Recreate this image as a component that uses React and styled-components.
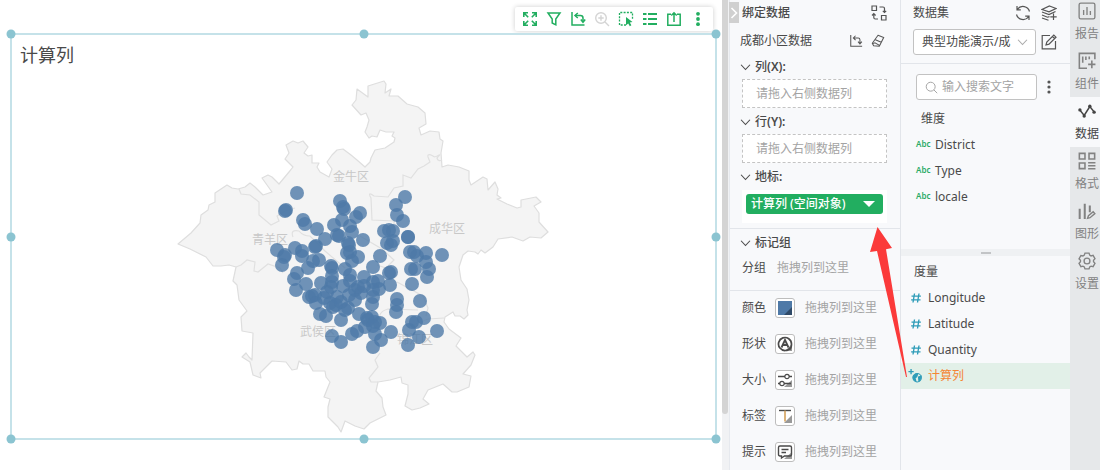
import React, { useState } from 'react';
import styled, { createGlobalStyle } from 'styled-components';

const GlobalStyle = createGlobalStyle`
  * {
    box-sizing: border-box;
  }

  body {
    margin: 0;
    background: #fff;
    color: #4a4a4a;
    font-family: "Noto Sans", "Noto Sans CJK SC", sans-serif;
    font-size: 12px;
    line-height: 20px;
  }

  button, input, select {
    font: inherit;
    color: inherit;
  }

  ul {
    margin: 0;
    padding: 0;
    list-style: none;
  }
`;

const Page = styled.div`
  position: relative;
  display: flex;
  min-height: 100vh;
`;

const Canvas = styled.main`
  flex: 1;
  display: flex;
  flex-direction: column;
  min-width: 0;
  padding: 7px 5px 30px 10px;
`;

const Toolbar = styled.div`
  display: flex;
  align-self: flex-end;
  gap: 8px;
  height: 24px;
  margin: 0 4px 2px 0;
  padding: 4px 7px;
  background: #fff;
  border-radius: 2px;
  box-shadow: 0 0 5px rgba(0, 0, 0, 0.2);
`;

const IconButton = styled.button`
  display: flex;
  padding: 0;
  border: 0;
  background: none;
  color: ${({ $color }) => $color || '#555'};
  cursor: pointer;
`;

const Frame = styled.section`
  position: relative;
  flex: 1;
  display: flex;
  flex-direction: column;
  align-items: center;
  border: 2px solid #c5e2e9;
`;

const Handle = styled.span`
  position: absolute;
  left: ${({ $x }) => $x};
  top: ${({ $y }) => $y};
  width: 9px;
  height: 9px;
  border-radius: 50%;
  background: #8bc4d1;
  transform: translate(-50%, -50%);
`;

const ChartTitle = styled.h1`
  align-self: flex-start;
  margin: 0;
  padding: 5px 8px 6px;
  font-size: 18px;
  font-weight: 400;
  line-height: 30px;
`;

const ScrollTrack = styled.div`
  width: 7px;
  background: #f1f2f4;
`;

const ScrollThumb = styled.div`
  width: 6px;
  height: 88%;
  border-radius: 0 0 3px 3px;
  background: #d4d4d4;
`;

const BindPanel = styled.aside`
  position: relative;
  width: 171px;
  background: #f8f9fb;
  border-left: 1px solid #e6e9ee;
`;

const CollapseButton = styled.button`
  position: absolute;
  left: -1px;
  top: 2px;
  display: flex;
  align-items: center;
  justify-content: center;
  width: 10px;
  height: 21px;
  padding: 0;
  border: 0;
  background: #d0d0d0;
  color: #fff;
`;

const PanelHeader = styled.header`
  display: flex;
  align-items: center;
  gap: ${({ $gap }) => $gap || '8px'};
  padding: ${({ $padding }) => $padding};
`;

const PanelTitle = styled.h2`
  flex: 1;
  margin: 0;
  font-size: 12px;
  font-weight: ${({ $strong }) => ($strong ? 500 : 400)};
`;

const Section = styled.section`
  padding: ${({ $padding }) => $padding || '0 13px 0 12px'};
  border-bottom: ${({ $line }) => ($line ? '1px solid #e2e5ea' : '0')};
`;

const SectionTitle = styled.h3`
  display: flex;
  align-items: center;
  gap: 4px;
  height: 20px;
  margin: 0 0 0 -2px;
  font-size: 12px;
  font-weight: 500;
`;

const AxisName = styled.span`
  b {
    font-weight: 600;
  }
`;

const DropZone = styled.div`
  height: 29px;
  margin: 2px 0 4px;
  padding: 0 13px;
  border: 1px dashed #c4c4c4;
  background: #fff;
  color: #a3a3a3;
  line-height: 27px;
`;

const FieldBox = styled.div`
  margin-top: 3px;
  padding: 4px 4px 9px;
  background: #fff;
`;

const FieldPill = styled.button`
  display: flex;
  align-items: center;
  justify-content: space-between;
  width: 100%;
  height: 20px;
  padding: 0 8px 0 5px;
  border: 0;
  border-radius: 3px;
  background: #22ae60;
  color: #fff;
  font-weight: 500;
`;

const MarkList = styled.div`
  display: flex;
  flex-direction: column;
  gap: 16px;
`;

const MarkRow = styled.div`
  display: flex;
  align-items: center;
  height: ${({ $height }) => $height || '20px'};
  gap: 10px;
`;

const MarkLabel = styled.span`
  width: 23px;
  white-space: nowrap;
`;

const MarkHint = styled.span`
  padding-left: ${({ $indent }) => $indent || '0'};
  color: #a3a3a3;
`;

const MarkButton = styled.button`
  display: flex;
  align-items: center;
  justify-content: center;
  width: 20px;
  height: 20px;
  padding: 0;
  border: 1px solid #bdbdbd;
  border-radius: 3px;
  background: #fff;
`;

const DataPanel = styled.aside`
  width: 170px;
  background: #f8f9fb;
  border-left: 1px solid #e2e5ea;
`;

const DatasetBar = styled.div`
  display: flex;
  align-items: center;
  gap: 5px;
  height: 39px;
  padding: 4px 13px 8px 12px;
  border-bottom: 1px solid #e2e5ea;
`;

const SelectBox = styled.label`
  flex: 1;
  display: flex;
  align-items: center;
  min-width: 0;
  height: 26px;
  padding: 0 7px 0 8px;
  border: 1px solid #c2c2c2;
  border-radius: 3px;
  background: #fff;
  color: #aaa;
`;

const Select = styled.select`
  flex: 1;
  min-width: 0;
  padding: 0;
  border: 0;
  background: transparent;
  color: #4a4a4a;
  appearance: none;
  outline: none;
`;

const SearchBar = styled.div`
  display: flex;
  align-items: center;
  gap: 4px;
  padding: 10px 13px 8px 15px;
`;

const SearchBox = styled.label`
  flex: 1;
  display: flex;
  align-items: center;
  gap: 4px;
  min-width: 0;
  height: 26px;
  padding: 0 8px;
  border: 1px solid #c2c2c2;
  border-radius: 3px;
  background: #fff;
  color: #a3a3a3;

  svg {
    flex-shrink: 0;
  }
`;

const SearchInput = styled.input`
  flex: 1;
  min-width: 0;
  padding: 0;
  border: 0;
  outline: none;
  background: transparent;

  &::placeholder {
    color: #a3a3a3;
    opacity: 1;
  }
`;

const GroupTitle = styled.h3`
  margin: 0;
  padding: ${({ $padding }) => $padding};
  font-size: 12px;
  font-weight: 400;
`;

const FieldList = styled.ul`
  min-height: ${({ $minHeight }) => $minHeight || '0'};
`;

const FieldItem = styled.li`
  display: flex;
  align-items: center;
  gap: ${({ $gap }) => $gap || '5px'};
  height: 26px;
  padding-left: ${({ $indent }) => $indent};
  background: ${({ $active }) => ($active ? '#e2f0e8' : 'transparent')};
  color: ${({ $active }) => ($active ? '#f58634' : 'inherit')};
`;

const AbcTag = styled.span`
  width: 14px;
  height: 20px;
  color: #2bab67;
  font-size: 8px;
  font-weight: 600;
  line-height: 18px;
`;

const Splitter = styled.div`
  display: flex;
  align-items: center;
  justify-content: center;
  height: 7px;
  background: #eff1f3;
`;

const Grip = styled.span`
  width: 10px;
  height: 2px;
  background: #c2c4c6;
`;

const SideTabs = styled.nav`
  width: 30px;
  background: #e6e8ea;
`;

const SideTab = styled.button`
  display: flex;
  flex-direction: column;
  align-items: center;
  gap: 4px;
  width: 100%;
  height: 50px;
  padding: 5px 0 0 4px;
  border: 0;
  background: ${({ $active }) => ($active ? '#f8f9fb' : 'transparent')};
  color: ${({ $active }) => ($active ? '#444' : '#828282')};
  white-space: nowrap;

  &:first-child {
    height: 47px;
    padding-top: 2px;
  }
`;

const Arrow = styled.svg`
  position: absolute;
  top: 227px;
  right: 192px;
  pointer-events: none;
`;

const Icon = ({ size = 16, children, ...rest }) => (
    <svg width={size} height={size} viewBox="0 0 16 16" fill="none" stroke="currentColor" strokeWidth="1.2" aria-hidden="true" {...rest}>
        {children}
    </svg>
);

const Chevron = ({ size = 11 }) => (
    <Icon size={size}><path d="M1.500 4 8 11l6.500-7" strokeWidth="1.600" /></Icon>
);

const toolbarIcons = [
    ['全屏', <Icon strokeWidth="1.6"><path d="M1.800 6V1.800H6M2 2l4.200 4.200M10 1.800h4.200V6M14 2 9.800 6.200M1.800 10v4.200H6M2 14l4.200-4.200M14.200 10v4.200H10M14 14 9.800 9.800" /></Icon>],
    ['筛选', <Icon strokeWidth="1.5"><path d="M2 2h12L9.800 8v5.800L6.200 12V8z" /></Icon>],
    ['转置', <Icon strokeWidth="1.5"><path d="M2 1v13h12.500M5.500 4.500h5q2.500 0 2.500 2.500v4" /><path d="M7.800 2 5 4.500 7.800 7M10.800 8.500 13 11.300l2.200-2.800" /></Icon>],
    ['放大', <Icon strokeWidth="1.4"><circle cx="7" cy="7" r="5.300" /><path d="m11 11 4 4M4.300 7h5.400M7 4.300v5.400" /></Icon>],
    ['选择', <Icon strokeWidth="1.3"><path d="M8 14H1.500V1.500H14.500V8" strokeDasharray="2 1.300" /><path d="m8 6 6.500 5-2.700.5 1.600 2.700-1.600 1-1.600-2.800L8 14.200z" fill="currentColor" stroke="none" /></Icon>],
    ['明细', <Icon strokeWidth="2"><path d="M1 3h3.500M6 3h9M1 8h3.500M6 8h9M1 13h3.500M6 13h9" /></Icon>],
    ['导出', <Icon strokeWidth="1.5"><path d="M5 3.300H1.800v10.900h12.400V3.300H11M8 11V2M5.300 4.500 8 1.800l2.700 2.700" /></Icon>],
    ['更多', <Icon stroke="none" fill="currentColor"><circle cx="8" cy="2.800" r="1.900" /><circle cx="8" cy="8" r="1.900" /><circle cx="8" cy="13.200" r="1.900" /></Icon>],
];

const swapIcon = <Icon><path d="M1 1h4.500v4.500H1zM10.500 10.500H15V15h-4.500zM8.500 2h3.500q1.500 0 1.500 1.500v4M11.800 5.800l1.700 1.700 1.700-1.700M7 14H4.300q-1.500 0-1.500-1.500V9M1 10.500l1.800-1.800 1.800 1.800" /></Icon>;
const axisIcon = <Icon size={14}><path d="M2 1v13h13M5 4.500h5.500q2 0 2 2V11M7.500 2 5 4.500 7.500 7M10.300 8.800l2.200 2.500 2.200-2.500" /></Icon>;
const eraserIcon = <Icon size={14}><path d="M8 1.500 14.500 4 9.500 14 3 13.500 1.500 10.500zM5 6.500l6.800 3M2 11l2.500-1 5.200 3" /></Icon>;
const refreshIcon = <Icon><path d="M14.500 6.500A6.800 6.800 0 0 0 2.500 4.200M1.500 9.500a6.800 6.800 0 0 0 12 2.300M2 1v3.800h3.800M14 15v-3.800h-3.800" /></Icon>;
const layersIcon = <Icon><path d="M8.500 1 15 3.500 8 6.800 1 4.500zM14.500 6.500 8 9.500 1 7M1 10l5.500 2.200 2-.6M1 13l6.500 2.300M12.500 8.500v6.500M9.300 11.800h6.400" /></Icon>;
const editIcon = <Icon><path d="M9 1.500H1.200v13.300h13.300V7M5 11l.8-3 7-7L15 3.200l-7 7zM11.500 2.500l2 2" /></Icon>;
const searchIcon = <Icon size={13}><circle cx="7" cy="7" r="5.500" /><path d="m11 11 4 4" /></Icon>;

const marks = [
    ['颜色', <Icon stroke="none"><path d="M1 1h14v14H1z" fill="#4e79a7" /><path d="M15 7v8H7z" fill="#2f4a68" /></Icon>],
    ['形状', <Icon><path d="M15 8v7H8z" fill="#999" stroke="none" /><path d="M13.500 11.500A6.500 6.500 0 1 1 14.500 8q0 4-2 5.500" strokeWidth="1.700" /><path d="M4.500 11.500 8 4l3.500 7.500M6 9h4" strokeWidth="1.800" /></Icon>],
    ['大小', <Icon><path d="M15 8v7H7z" fill="#999" stroke="none" /><path d="M1 4.500h7M12 4.500h3M1 11.500h2M7 11.500h7" strokeWidth="1.400" /><circle cx="10" cy="4.500" r="2.200" /><circle cx="5" cy="11.500" r="2.200" /></Icon>],
    ['标签', <Icon><path d="M15 7v8H7z" fill="#999" stroke="none" /><path d="M2 2.500h12" strokeWidth="1.400" /><path d="M8 2.500v11" stroke="#d3a05a" strokeWidth="1.600" /></Icon>],
    ['提示', <Icon><path d="M15 8v7H7z" fill="#999" stroke="none" /><path d="M3 2h10q1.500 0 1.500 1.500v7Q14.500 12 13 12H7.500L4.500 14v-2H3q-1.500 0-1.500-1.500v-7Q1.500 2 3 2zM4.500 5.500h7M4.500 8.500h4.500" strokeWidth="1.400" /></Icon>],
];

const tabs = [
    ['报告', <Icon size={18}><rect x="1" y="1" width="14" height="14" rx="1.500" /><path d="M5 7v4.500M8 4.500v7M11 8v3.500" /></Icon>],
    ['组件', <Icon size={18}><path d="M15 6.500V1.200H1.200v13.300H8M4.200 4v5.500M7 4v3M10 4v2.500M12.300 7.500v7M9 11h6.500" strokeWidth="1.400" /></Icon>],
    ['数据', <Icon size={18}><path d="M1.500 7 5.500 12 10.500 4l4 5" strokeWidth="1.400" /><g fill="currentColor" stroke="none"><circle cx="1.700" cy="7" r="1.500" /><circle cx="5.500" cy="12.500" r="1.500" /><circle cx="10.500" cy="3.800" r="1.500" /><circle cx="14.300" cy="9" r="1.500" /></g></Icon>],
    ['格式', <Icon size={18}><path d="M1.200 1.200h5v5h-5zM9.800 1.200h5v5h-5zM1.200 9.800h5v5h-5zM9 9.500h6.500M9 12.200h6.500M9 14.900h6.500" strokeWidth="1.400" /></Icon>],
    ['图形', <Icon size={18}><path d="M1.500 6v9M6 1.500V15M10.500 3v6" strokeWidth="1.800" /><path d="m8.500 14.500.8-2.300 4.200-3.500 1.500 1.600-4.300 3.700z" /></Icon>],
    ['设置', <Icon size={18}><path d="m6.200 1-.6 1.800-1.200.7-1.800-.4-1.700 3L2.200 7.300v1.400L.9 10l1.700 3 1.800-.4 1.200.7.6 1.700h3.600l.6-1.700 1.200-.7 1.800.4 1.700-3-1.300-1.300V7.300L15.100 6l-1.700-3-1.800.5-1.200-.7L9.800 1z" /><circle cx="8" cy="8" r="2.600" /></Icon>],
];

const outline = `178,244 191,233 200,223 201,215 208,210 209,205 215,202 215,193 221,189 227,185 232,188 238,189 245,187
  250,183 255,187 263,195 272,192 267,185 262,178 268,175 272,177 279,184 289,172 293,167 285,159 289,153 286,145 293,141 298,143
  303,141 308,147 304,153 308,156 312,155 312,163 319,163 317,167 320,172 329,177 332,169 327,162 332,155 337,150 343,149
  351,155 357,160 365,167 370,162 371,158 375,150 385,148 394,142 395,138 392,136 394,132 386,132 380,130 377,137 372,136 369,138
  365,132 367,127 369,120 366,113 361,115 352,105 356,100 357,89 368,97 368,86 384,81 386,84 385,93 391,89 389,96 398,96 407,104
  418,107 425,113 426,124 419,128 421,135 430,131 439,132 440,139 443,141 441,153 442,167 448,165 459,167 469,171 469,180
  471,185 483,177 487,179 488,190 495,182 498,189 497,195 501,198 497,199 507,204 517,208 521,207 521,200 536,197 541,202
  534,206 539,213 539,222 548,232 541,238 530,237 523,241 512,237 498,239 493,247 485,253 481,250 478,254 475,252 468,251 463,255 459,267
  461,280 467,289 469,300 467,310 468,315 464,319 460,316 455,316 453,312 445,317 444,322 449,329 461,338 456,346 467,357
  473,352 475,355 471,365 463,374 471,376 469,387 457,392 452,392 443,384 428,390 423,399 429,404 420,408 412,410 405,406
  408,394 408,385 402,383 401,377 390,380 378,382 376,391 382,398 383,407 386,415 370,423 364,429 355,426 345,421 341,432 338,427
  328,417 328,407 330,399 324,397 330,382 326,377 325,371 313,371 309,364 303,364 299,361 297,369 292,370 286,362 272,361 260,373
  261,378 253,375 250,362 242,357 246,353 249,357 252,360 253,333 242,331 241,317 247,311 239,300 237,285 233,281 236,267
  229,265 221,266 213,266 206,257 190,249`;

const borders = [
    'M239 189l2 5 9 1 9 7v13l12 10 8-4-2-5 8-5 10-3',
    'M236 267l5-2 6-5 8 2-1 9 4 1 10-8 12 4 3 5M293 237q-3-8 6-6 4 5 11 5l15 15 20 17',
    'M442 160q-4 2-5-2 4-4 2-3-5 3-6 1-6-3-5 1l2 5-6 4-6 3-7 9-8-3v11l-9 2-6 9-14-1q-7-5-3 2l1 22 22 1v12',
    'M360 236l22 13 12 11-8 8-9-3M397 282l26 14 5 12-2 8M444 318l-16 1-20 8M380 353l-5 7 3 7-9 11 2 4 7 0M380 322q-3-10 8-13l30 1',
];

const districts = [
    ['金牛区', 333, 181],
    ['成华区', 429, 233],
    ['青羊区', 252, 244],
    ['武侯区', 300, 336],
    ['锦江区', 397, 344],
];

const estates = [
    [297, 193], [286, 210], [285, 211], [303, 220], [305, 224], [317, 229], [325, 239], [277, 250], [285, 255], [295, 248],
    [302, 251], [302, 256], [316, 246], [315, 247], [340, 201], [343, 207], [344, 209], [342, 220], [356, 217], [360, 213],
    [334, 225], [350, 226], [352, 232], [337, 235], [339, 236], [363, 240], [348, 243], [349, 245], [347, 253], [350, 252], [358, 257],
    [405, 197], [396, 205], [397, 215], [403, 221], [384, 231], [389, 230], [393, 231], [408, 237], [408, 237], [387, 243],
    [391, 245], [393, 241], [410, 252], [414, 252], [417, 256], [426, 253], [442, 255], [380, 256], [284, 257], [282, 265],
    [308, 268], [313, 261], [319, 260], [297, 273], [294, 279], [306, 284], [296, 290], [321, 283], [331, 266], [332, 268],
    [332, 276], [332, 282], [331, 287], [345, 269], [350, 275], [350, 281], [364, 277], [309, 297], [312, 296], [315, 295],
    [316, 303], [324, 298], [337, 297], [343, 286], [355, 290], [358, 287], [361, 293], [349, 295], [355, 300], [330, 303],
    [333, 307], [336, 305], [345, 310], [348, 308], [320, 314], [326, 316], [341, 320], [359, 314], [367, 318], [332, 336],
    [341, 342], [352, 334], [357, 331], [365, 327], [352, 261], [426, 262], [429, 269], [427, 277], [411, 269], [415, 269],
    [412, 284], [373, 267], [391, 272], [389, 273], [390, 285], [379, 289], [373, 282], [378, 281], [373, 290], [373, 297],
    [372, 304], [397, 299], [397, 305], [396, 312], [420, 301], [372, 317], [368, 320], [375, 322], [380, 323], [373, 326],
    [391, 332], [375, 334], [381, 340], [373, 347], [412, 322], [416, 322], [424, 318], [409, 330], [419, 337], [408, 345], [437, 331],
    [327, 292], [341, 302], [364, 286],
];

const handles = [
    ['-1px', '-1px'], ['50%', '-1px'], ['calc(100% + 1px)', '-1px'],
    ['-1px', '50%'], ['calc(100% + 1px)', '50%'],
    ['-1px', 'calc(100% + 1px)'], ['50%', 'calc(100% + 1px)'], ['calc(100% + 1px)', 'calc(100% + 1px)'],
];

const DistrictMap = () => (
    <svg width="387" height="358" viewBox="170 76 387 358" role="img" aria-label="计算列">
        <polygon points={outline} fill="#f4f4f4" stroke="#dedede" strokeWidth="1.200" strokeLinejoin="round" />
        {borders.map((d) => (
            <path key={d} d={d} fill="none" stroke="#e0e0e0" strokeWidth="1.200" />
        ))}
        {districts.map(([name, x, y]) => (
            <text key={name} x={x} y={y} fontSize="12" fill="#c8c8c8">{name}</text>
        ))}
        {estates.map(([x, y], index) => (
            <circle key={index} cx={x} cy={y} r="7" fill="#4e79a7" fillOpacity="0.8" />
        ))}
    </svg>
);

const App = () => {
    const [keyword, setKeyword] = useState('');
    const [tab, setTab] = useState('数据');

    return (
        <Page>
            <GlobalStyle />
            <Canvas>
                <Toolbar>
                    {toolbarIcons.map(([name, icon]) => (
                        <IconButton key={name} type="button" aria-label={name} $color={name === '放大' ? '#d4d4d4' : '#22ae60'}>
                            {icon}
                        </IconButton>
                    ))}
                </Toolbar>
                <Frame>
                    <ChartTitle>计算列</ChartTitle>
                    <DistrictMap />
                    {handles.map(([x, y]) => (
                        <Handle key={x + y} $x={x} $y={y} />
                    ))}
                </Frame>
            </Canvas>

            <ScrollTrack><ScrollThumb /></ScrollTrack>

            <BindPanel>
                <CollapseButton type="button" aria-label="收起">
                    <svg width="8" height="12" viewBox="0 0 8 12" fill="none" stroke="currentColor" strokeWidth="1.600"><path d="m1.500 1 5 5-5 5" /></svg>
                </CollapseButton>
                <PanelHeader $padding="3px 13px 5px 12px">
                    <PanelTitle $strong>绑定数据</PanelTitle>
                    <IconButton type="button" aria-label="切换">{swapIcon}</IconButton>
                </PanelHeader>
                <PanelHeader $padding="3px 15px 6px 10px">
                    <PanelTitle>成都小区数据</PanelTitle>
                    <IconButton type="button" aria-label="行列转置">{axisIcon}</IconButton>
                    <IconButton type="button" aria-label="清除">{eraserIcon}</IconButton>
                </PanelHeader>
                <Section>
                    <SectionTitle><Chevron /><AxisName>列<b>(X):</b></AxisName></SectionTitle>
                    <DropZone>请拖入右侧数据列</DropZone>
                    <SectionTitle><Chevron /><AxisName>行<b>(Y):</b></AxisName></SectionTitle>
                    <DropZone>请拖入右侧数据列</DropZone>
                </Section>
                <Section $line $padding="0 13px 5px 12px">
                    <SectionTitle><Chevron /><AxisName>地标<b>:</b></AxisName></SectionTitle>
                    <FieldBox>
                        <FieldPill type="button">
                            计算列 (空间对象)
                            <svg width="12" height="6" viewBox="0 0 12 6" fill="currentColor"><path d="M0 0h12L6 6z" /></svg>
                        </FieldPill>
                    </FieldBox>
                </Section>
                <Section $line $padding="4px 13px 7px 12px">
                    <SectionTitle><Chevron />标记组</SectionTitle>
                    <MarkRow $height="30px">
                        <MarkLabel>分组</MarkLabel>
                        <MarkHint $indent="2px">拖拽列到这里</MarkHint>
                    </MarkRow>
                </Section>
                <Section $padding="7px 13px 0 12px">
                    <MarkList>
                        {marks.map(([name, icon]) => (
                            <MarkRow key={name}>
                                <MarkLabel>{name}</MarkLabel>
                                <MarkButton type="button" aria-label={name}>{icon}</MarkButton>
                                <MarkHint>拖拽列到这里</MarkHint>
                            </MarkRow>
                        ))}
                    </MarkList>
                </Section>
            </BindPanel>

            <DataPanel>
                <PanelHeader $padding="3px 13px 2px 12px" $gap="10px">
                    <PanelTitle>数据集</PanelTitle>
                    <IconButton type="button" aria-label="刷新">{refreshIcon}</IconButton>
                    <IconButton type="button" aria-label="添加">{layersIcon}</IconButton>
                </PanelHeader>
                <DatasetBar>
                    <SelectBox>
                        <Select aria-label="数据集">
                            <option>典型功能演示/成</option>
                        </Select>
                        <Chevron />
                    </SelectBox>
                    <IconButton type="button" aria-label="编辑">{editIcon}</IconButton>
                </DatasetBar>
                <SearchBar>
                    <SearchBox>
                        {searchIcon}
                        <SearchInput
                            aria-label="搜索"
                            placeholder="输入搜索文字"
                            value={keyword}
                            onChange={(e) => setKeyword(e.target.value)}
                        />
                    </SearchBox>
                    <IconButton type="button" aria-label="更多">
                        <Icon stroke="none" fill="currentColor"><circle cx="8" cy="3" r="1.600" /><circle cx="8" cy="8" r="1.600" /><circle cx="8" cy="13" r="1.600" /></Icon>
                    </IconButton>
                </SearchBar>
                <GroupTitle $padding="1px 20px 3px">维度</GroupTitle>
                <FieldList $minHeight="117px">
                    {['District', 'Type', 'locale'].map((name) => (
                        <FieldItem key={name} $indent="15px">
                            <AbcTag>Abc</AbcTag>
                            {name}
                        </FieldItem>
                    ))}
                </FieldList>
                <Splitter><Grip /></Splitter>
                <GroupTitle $padding="6px 13px 3px">度量</GroupTitle>
                <FieldList>
                    {['Longitude', 'Latitude', 'Quantity'].map((name) => (
                        <FieldItem key={name} $indent="9px" $gap="6px">
                            <Icon size={12} stroke="#2e9cb8" strokeWidth="1.800"><path d="M6 2 4 14M12 2l-2 12M2 5.500h12.500M1.500 10.500H14" /></Icon>
                            {name}
                        </FieldItem>
                    ))}
                    <FieldItem $active $indent="7px" $gap="6px">
                        <Icon size={14} stroke="#2e9cb8">
                            <path d="M3.500 0v6M.5 3h6" strokeWidth="1.500" />
                            <circle cx="10.500" cy="10" r="4.800" />
                            <path d="M7 7q3-2 4-1l-1 3-2 1 1 4q-4-2-3-6zM12 9l3-1q0 4-2.500 6z" fill="#2e9cb8" />
                        </Icon>
                        计算列
                    </FieldItem>
                </FieldList>
            </DataPanel>

            <SideTabs>
                {tabs.map(([name, icon]) => (
                    <SideTab key={name} type="button" $active={name === tab} onClick={() => setTab(name)}>
                        {icon}
                        {name}
                    </SideTab>
                ))}
            </SideTabs>

            <Arrow width="38" height="151" viewBox="0 0 38 151" aria-hidden="true">
                <path d="M7.500 0 22 21l-6 1.200L37 150h-1L7 24l-7 1z" fill="#fb3a3a" />
            </Arrow>
        </Page>
    );
};

export default App;
